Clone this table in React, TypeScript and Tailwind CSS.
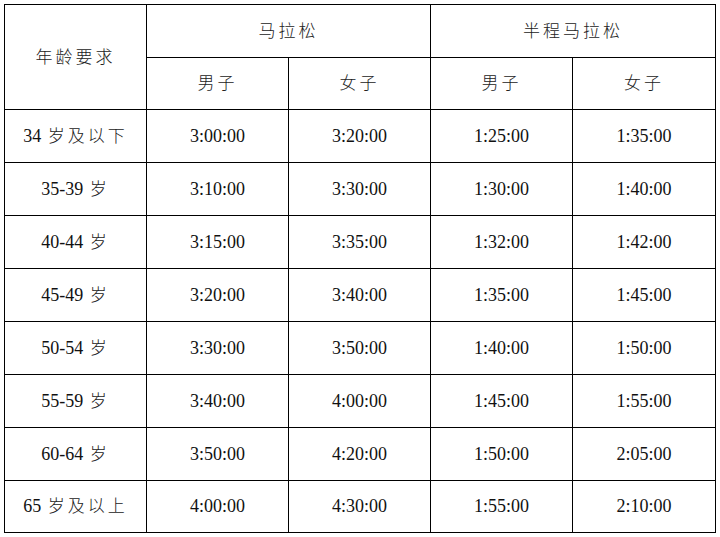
const rows: [string, string, string, string, string][] = [
  ["34 |岁及以下", "3:00:00", "3:20:00", "1:25:00", "1:35:00"],
  ["35-39 |岁", "3:10:00", "3:30:00", "1:30:00", "1:40:00"],
  ["40-44 |岁", "3:15:00", "3:35:00", "1:32:00", "1:42:00"],
  ["45-49 |岁", "3:20:00", "3:40:00", "1:35:00", "1:45:00"],
  ["50-54 |岁", "3:30:00", "3:50:00", "1:40:00", "1:50:00"],
  ["55-59 |岁", "3:40:00", "4:00:00", "1:45:00", "1:55:00"],
  ["60-64 |岁", "3:50:00", "4:20:00", "1:50:00", "2:05:00"],
  ["65 |岁及以上", "4:00:00", "4:30:00", "1:55:00", "2:10:00"],
];

const Cjk = ({ children }: { children: string }) => (
  <span className="text-[17px] tracking-[3px] font-light text-[#222]">{children}</span>
);

const cell = "border border-black text-center align-middle p-0";

export default function App() {
  return (
    <div
      className="w-[720px] h-[537px] bg-white pt-[4px] pl-[4px] text-[#111]"
      style={{ fontFamily: '"Liberation Serif", "Noto Sans CJK SC", serif' }}
    >
      <table className="table-fixed border-collapse w-[712px] text-[18px]">
        <colgroup>
          <col className="w-[142px]" />
          <col className="w-[142px]" />
          <col className="w-[142px]" />
          <col className="w-[142px]" />
          <col className="w-[143px]" />
        </colgroup>
        <thead>
          <tr className="h-[53px]">
            <th rowSpan={2} className={`${cell} font-normal`}>
              <Cjk>年龄要求</Cjk>
            </th>
            <th colSpan={2} className={`${cell} font-normal`}>
              <Cjk>马拉松</Cjk>
            </th>
            <th colSpan={2} className={`${cell} font-normal`}>
              <Cjk>半程马拉松</Cjk>
            </th>
          </tr>
          <tr className="h-[52px]">
            <th className={`${cell} font-normal`}><Cjk>男子</Cjk></th>
            <th className={`${cell} font-normal`}><Cjk>女子</Cjk></th>
            <th className={`${cell} font-normal`}><Cjk>男子</Cjk></th>
            <th className={`${cell} font-normal`}><Cjk>女子</Cjk></th>
          </tr>
        </thead>
        <tbody>
          {rows.map((r, i) => {
            const [num, zh] = r[0].split("|");
            return (
              <tr key={i} className={i === rows.length - 1 ? "h-[52px]" : "h-[53px]"}>
                <td className={cell}>
                  {num}
                  <span className="ml-[2px]">
                    <Cjk>{zh}</Cjk>
                  </span>
                </td>
                {r.slice(1).map((v, j) => (
                  <td key={j} className={cell}>
                    {v}
                  </td>
                ))}
              </tr>
            );
          })}
        </tbody>
      </table>
    </div>
  );
}
